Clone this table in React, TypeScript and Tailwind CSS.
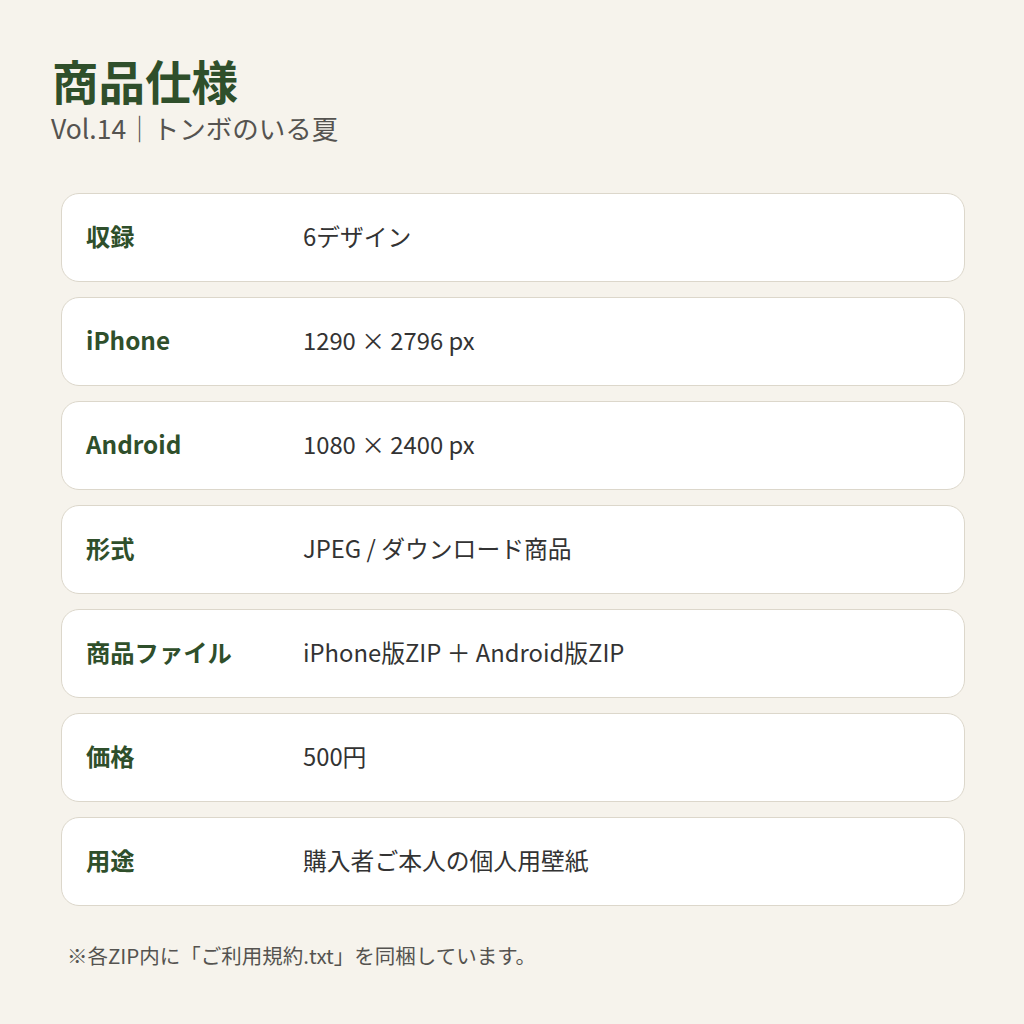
import React from 'react';

const specs: { label: string; value: string }[] = [
    { label: '収録', value: '6デザイン' },
    { label: 'iPhone', value: '1290 × 2796 px' },
    { label: 'Android', value: '1080 × 2400 px' },
    { label: '形式', value: 'JPEG / ダウンロード商品' },
    { label: '商品ファイル', value: 'iPhone版ZIP ＋ Android版ZIP' },
    { label: '価格', value: '500円' },
    { label: '用途', value: '購入者ご本人の個人用壁紙' },
];

export default function App() {
    return (
        <div
            className="w-[1024px] h-[1024px] bg-[#f6f3ec] px-[61px] pt-[52px]"
            style={{ fontFamily: '"Noto Sans CJK JP", "Noto Sans", sans-serif' }}
        >
            <h1 className="ml-[-9px] text-[46.5px] leading-[56px] font-bold text-[#2f4f2b]">商品仕様</h1>
            <p className="mt-[4px] ml-[-10px] text-[26.5px] leading-[32px] text-[#555350]">Vol.14｜トンボのいる夏</p>

            <div className="mt-[49px] flex flex-col gap-[15px] w-[904px]">
                {specs.map((s) => (
                    <div
                        key={s.label}
                        className="h-[89px] flex items-center rounded-[18px] border border-[#dcd7cb] bg-white pl-[24px] pb-[3px]"
                    >
                        <span className="w-[217px] text-[24.3px] font-bold text-[#2f4f2b]">{s.label}</span>
                        <span className="text-[23.8px] text-[#333333]">{s.value}</span>
                    </div>
                ))}
            </div>

            <p className="mt-[34px] ml-[6px] text-[20.5px] text-[#555350]">
                ※各ZIP内に「ご利用規約.txt」を同梱しています。
            </p>
        </div>
    );
}
